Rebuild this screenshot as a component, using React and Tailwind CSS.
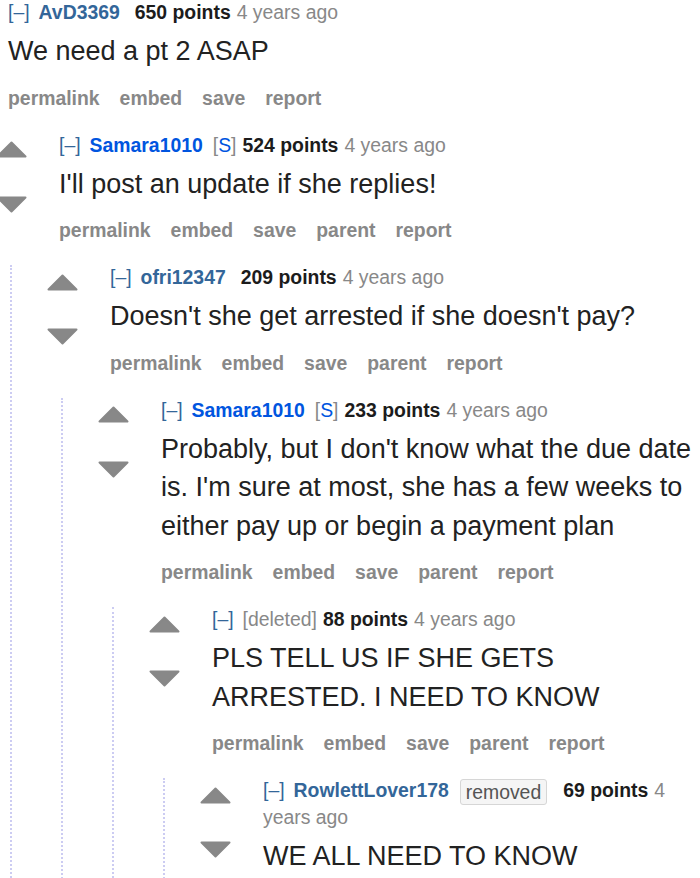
import React from "react";

function Arrow({ down }) {
  return (
    <svg width="31" height="17" viewBox="0 0 31 17" className="block">
      {down ? (
        <polygon points="1.5,1.5 29.5,1.5 15.5,15.5" fill="#888888" stroke="#888888" strokeWidth="2" strokeLinejoin="round" />
      ) : (
        <polygon points="15.5,1.5 29.5,15.5 1.5,15.5" fill="#888888" stroke="#888888" strokeWidth="2" strokeLinejoin="round" />
      )}
    </svg>
  );
}

const data = {
  author: "AvD3369",
  authorColor: "text-[#336699]",
  nameMr: "mr-[15px]",
  points: "650 points",
  body: "We need a pt 2 ASAP",
  buttons: ["permalink", "embed", "save", "report"],
  child: {
    author: "Samara1010",
    authorColor: "text-[#0055df]",
    nameMr: "mr-[10px]",
    submitter: true,
    points: "524 points",
    body: "I'll post an update if she replies!",
    buttons: ["permalink", "embed", "save", "parent", "report"],
    child: {
      author: "ofri12347",
      authorColor: "text-[#336699]",
      nameMr: "mr-[15px]",
      points: "209 points",
      body: "Doesn't she get arrested if she doesn't pay?",
      buttons: ["permalink", "embed", "save", "parent", "report"],
      child: {
        author: "Samara1010",
        authorColor: "text-[#0055df]",
        nameMr: "mr-[10px]",
        submitter: true,
        points: "233 points",
        body: "Probably, but I don't know what the due date is. I'm sure at most, she has a few weeks to either pay up or begin a payment plan",
        buttons: ["permalink", "embed", "save", "parent", "report"],
        child: {
          deleted: true,
          points: "88 points",
          body: "PLS TELL US IF SHE GETS ARRESTED. I NEED TO KNOW",
          buttons: ["permalink", "embed", "save", "parent", "report"],
          child: {
            author: "RowlettLover178",
            authorColor: "text-[#336699]",
            nameMr: "mr-[11px]",
            flair: "removed",
            points: "69 points",
            body: "WE ALL NEED TO KNOW",
            buttons: ["permalink", "embed", "save", "parent", "report"],
          },
        },
      },
    },
  },
};

function Comment({ c }) {
  return (
    <div>
      <div className="flex">
        <div className="w-[63px] shrink-0 flex flex-col pt-[8.5px]">
          <Arrow />
          <div className="h-[37.5px]" />
          <Arrow down />
        </div>
        <div className="flex-1 min-w-0">
          <div className="text-[19.4px] leading-[25px] text-[#888888]">
            <span className="mr-[9px] text-[#336699]">[–]</span>
            {c.deleted ? (
              <span className="mr-[6px] text-[#888888]">[deleted]</span>
            ) : (
              <span className={`font-bold ${c.authorColor} ${c.nameMr}`}>{c.author}</span>
            )}
            {c.submitter && (
              <span className="mr-[6px] text-[#888888]">
                [<span className="text-[#0055df]">S</span>]
              </span>
            )}
            {c.flair && (
              <span className="mr-[16px] inline-block align-middle rounded-[3px] border border-[#d6d6d6] bg-[#f5f5f5] px-[5px] leading-[24px] text-[#545454]">
                {c.flair}
              </span>
            )}
            <span className="mr-[6px] font-bold text-[#1c1c1c]">{c.points}</span>
            <span className="text-[#888888]">4 years ago</span>
          </div>
          <div className="mt-[7px] text-[27px] leading-[38.5px] text-[#222222]">{c.body}</div>
          <div className="mt-[15px] flex gap-[20px] text-[19.4px] leading-[24px] font-bold text-[#888888]">
            {c.buttons.map((b) => (
              <span key={b}>{b}</span>
            ))}
          </div>
        </div>
      </div>
      {c.child && (
        <div className="mt-[23px] ml-[14px] border-l-2 border-dotted border-[#ccccf2] pl-[35px]">
          <Comment c={c.child} />
        </div>
      )}
    </div>
  );
}

export default function App() {
  return (
    <div className="w-[700px] h-[878px] overflow-hidden bg-white font-['Liberation_Sans',Arial,sans-serif]">
      <div className="ml-[-55px]">
        <Comment c={data} />
      </div>
    </div>
  );
}
